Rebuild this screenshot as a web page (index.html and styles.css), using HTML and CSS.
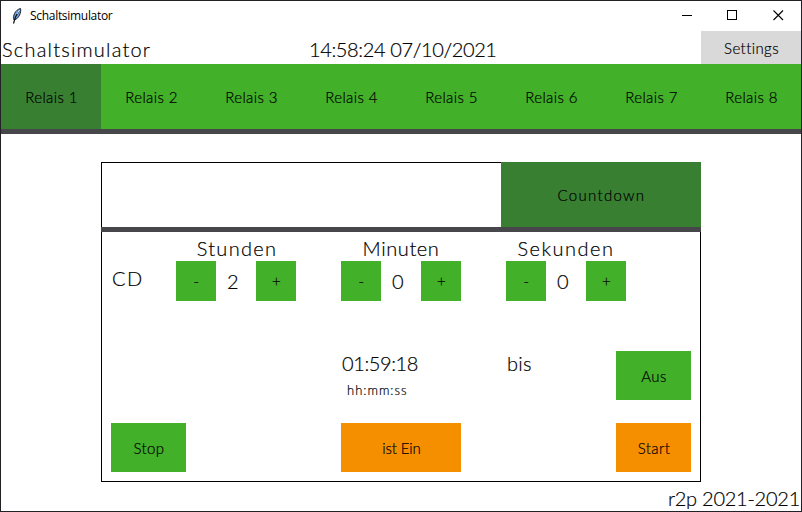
FILE: index.html
```html
<!DOCTYPE html>
<html lang="de">
<head>
<meta charset="utf-8">
<title>Schaltsimulator</title>
<link rel="stylesheet" href="styles.css">
</head>
<body>
<div class="window">
  <div class="titlebar">
    <svg class="feather" width="12" height="16" viewBox="0 0 12 16"><path d="M3 12C1.500 8 4 2 9.500 .5C10.500 4 8 11 3 12Z" fill="#6f9fdc" stroke="#16202c" stroke-width="1"/><path d="M8 3L4.500 9L2.500 15.500" fill="none" stroke="#111" stroke-width="1.200"/><path d="M8.500 2L6 6" stroke="#d6e8ff" stroke-width="1"/></svg>
    <span class="caption">Schaltsimulator</span>
    <div class="controls">
      <svg width="46" height="30" viewBox="0 0 46 30"><path d="M18 14.500H28" stroke="#000"/></svg>
      <svg width="46" height="30" viewBox="0 0 46 30"><rect x="17.500" y="9.500" width="9" height="9" fill="none" stroke="#000"/></svg>
      <svg width="46" height="30" viewBox="0 0 46 30"><path d="M17.500 9.500L27 19M27 9.500L17.500 19" stroke="#000" stroke-width="1.100"/></svg>
    </div>
  </div>
  <header class="header">
    <span class="brand">Schaltsimulator</span>
    <span class="clock">14:58:24 07/10/2021</span>
    <button class="settings">Settings</button>
  </header>
  <nav class="relays">
    <button class="relay active">Relais 1</button>
    <button class="relay">Relais 2</button>
    <button class="relay">Relais 3</button>
    <button class="relay">Relais 4</button>
    <button class="relay">Relais 5</button>
    <button class="relay">Relais 6</button>
    <button class="relay">Relais 7</button>
    <button class="relay">Relais 8</button>
  </nav>
  <main class="panel">
    <div class="tabs">
      <div class="tabs-empty"></div>
      <button class="tab">Countdown</button>
    </div>
    <div class="body">
      <div class="row labels">
        <span></span>
        <span class="label stunden">Stunden</span>
        <span class="label minuten">Minuten</span>
        <span class="label sekunden">Sekunden</span>
      </div>
      <div class="row pickers">
        <span class="cd">CD</span>
        <div class="picker"><button>-</button><span>2</span><button>+</button></div>
        <div class="picker"><button>-</button><span>0</span><button>+</button></div>
        <div class="picker"><button>-</button><span>0</span><button>+</button></div>
      </div>
      <div class="row status">
        <span></span><span></span>
        <div class="remaining"><span class="time">01:59:18</span><span class="format">hh:mm:ss</span></div>
        <span class="until">bis</span>
        <button class="action aus">Aus</button>
      </div>
      <div class="row actions">
        <button class="action stop">Stop</button>
        <span></span>
        <button class="state orange">ist Ein</button>
        <span></span>
        <button class="action orange start">Start</button>
      </div>
    </div>
  </main>
  <footer class="footer"><span>r2p 2021-2021</span></footer>
</div>
</body>
</html>
```

FILE: styles.css
```css
* { box-sizing: border-box; }
body {
  margin: 0;
  font-family: "Lato", "Liberation Sans", sans-serif;
  font-weight: 300;
  font-size: 20px;
  font-variant-ligatures: none;
  -webkit-text-stroke: 0.2px #000;
  color: #000;
}
button {
  border: 0;
  padding: 0 0 0 1px;
  background: #43b02a;
  color: #000;
  font: inherit;
  font-size: 15px;
  font-variant-ligatures: none;
  letter-spacing: 0.4px;
}
.window {
  width: 802px;
  height: 512px;
  border: 1px solid #222125;
  background: #fff;
  display: flex;
  flex-direction: column;
  overflow: hidden;
}
.titlebar { height: 30px; display: flex; align-items: center; padding-left: 10px; flex: none; }
.feather { margin-right: 7px; }
.caption { font: 400 12px/16px "Open Sans", sans-serif; letter-spacing: -0.3px; -webkit-text-stroke: 0; }
.controls { display: flex; margin: 0 -1px 0 auto; }
.controls svg { display: block; }
.header { height: 33px; display: grid; grid-template-columns: 300px 400px 100px; flex: none; white-space: nowrap; }
.header span { line-height: 37px; height: 33px; }
.brand { letter-spacing: 1.2px; padding-left: 1px; }
.header .clock { padding-left: 8px; letter-spacing: -0.38px; }
.settings { line-height: 35px; background: #d9d9d9; }
.relays { height: 70px; display: flex; border-bottom: 5px solid #47464b; flex: none; }
.relay { width: 100px; height: 65px; }
.active, .tab { background: #387f32; }
.panel { width: 600px; margin: 28px 0 0 100px; flex: none; }
.tabs { height: 70px; display: flex; border-bottom: 5px solid #47464b; }
.tabs-empty { width: 400px; border: solid #000; border-width: 1px 0 0 1px; }
.tab { width: 200px; letter-spacing: 1.3px; }
.body { height: 250px; border: 1px solid #000; border-top: 0; padding-left: 9px; }
.row { display: grid; grid-template-columns: 65px 165px 165px 110px 75px; }
.labels { height: 29px; line-height: 33px; }
.label { width: 120px; text-align: center; }
.stunden { letter-spacing: 1.3px; padding-left: 2px; }
.minuten { letter-spacing: 0.6px; }
.sekunden { letter-spacing: 1.5px; }
.pickers { height: 40px; }
.cd { line-height: 35px; padding-left: 1px; letter-spacing: 1.5px; }
.picker { width: 120px; height: 40px; display: grid; grid-template: 40px / 40px 40px 40px; }
.picker span { line-height: 41px; padding-left: 11px; }
.status { height: 49px; margin-top: 50px; }
.remaining { display: flex; flex-direction: column; }
.time { line-height: 25px; letter-spacing: -0.4px; padding-left: 1px; }
.format { font-size: 13px; line-height: 29px; padding-left: 6px; letter-spacing: 1px; }
.until { line-height: 25px; padding-left: 1px; letter-spacing: 0.3px; }
.action { width: 75px; height: 49px; }
.actions { height: 49px; margin-top: 23px; }
.state { width: 120px; height: 49px; letter-spacing: -0.1px; }
.orange { background: #f68f00; }
.footer { height: 29px; text-align: right; line-height: 33px; padding-right: 1px; letter-spacing: -0.25px; flex: none; }
```
